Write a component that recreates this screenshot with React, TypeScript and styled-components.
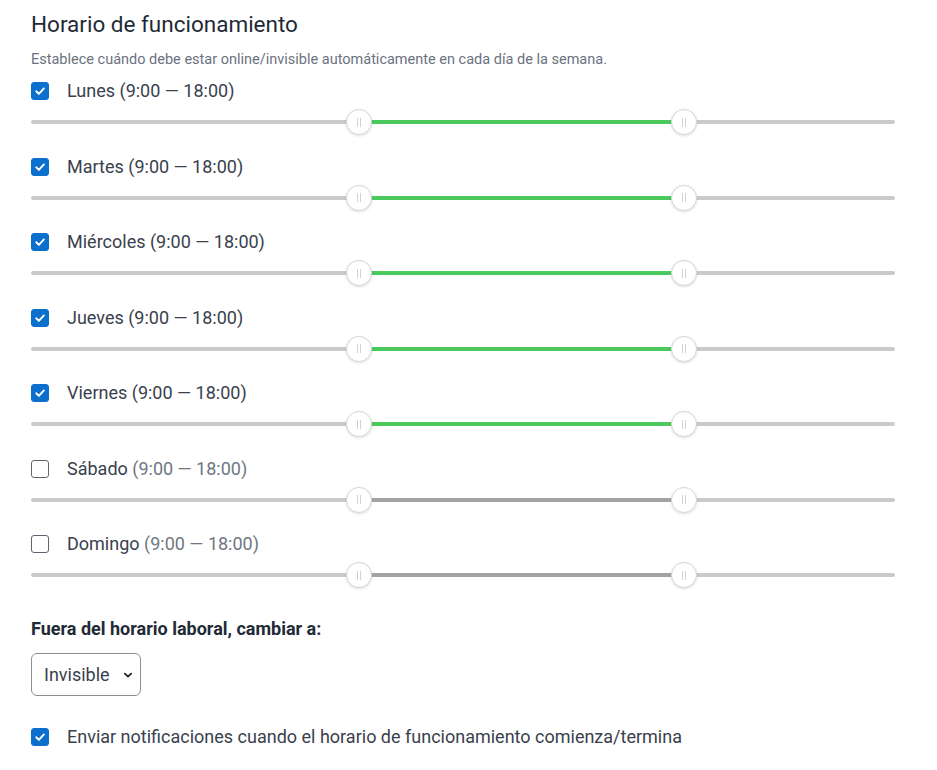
import styled, { createGlobalStyle } from 'styled-components'

const GlobalStyle = createGlobalStyle`
  body {
    margin: 0;
    background: #ffffff;
    font-family: Roboto, 'Liberation Sans', Arial, sans-serif;
  }
`

interface Day {
  name: string
  enabled: boolean
}

const days: Day[] = [
  { name: 'Lunes', enabled: true },
  { name: 'Martes', enabled: true },
  { name: 'Miércoles', enabled: true },
  { name: 'Jueves', enabled: true },
  { name: 'Viernes', enabled: true },
  { name: 'Sábado', enabled: false },
  { name: 'Domingo', enabled: false },
]

// thumb centres as a fraction of the track
const START = 0.3796
const END = 0.7558

function CheckIcon(): JSX.Element {
  return (
    <svg width="12" height="12" viewBox="0 0 12 12" fill="none">
      <path
        d="M2.2 6.3 L4.9 8.9 L9.9 3.4"
        stroke="#ffffff"
        strokeWidth="1.9"
        strokeLinecap="round"
        strokeLinejoin="round"
      />
    </svg>
  )
}

function Checkbox({ checked }: { checked: boolean }): JSX.Element {
  return <Box checked={checked}>{checked && <CheckIcon />}</Box>
}

function RangeSlider({ active }: { active: boolean }): JSX.Element {
  return (
    <SliderArea>
      <Track>
        <Fill
          active={active}
          style={{ left: `${START * 100}%`, width: `${(END - START) * 100}%` }}
        />
      </Track>
      <Thumb style={{ left: `${START * 100}%` }}>
        <Grip />
        <Grip />
      </Thumb>
      <Thumb style={{ left: `${END * 100}%` }}>
        <Grip />
        <Grip />
      </Thumb>
    </SliderArea>
  )
}

function App(): JSX.Element {
  return (
    <Page>
      <GlobalStyle />
      <Title>Horario de funcionamiento</Title>
      <Description>
        Establece cuándo debe estar online/invisible automáticamente en cada día
        de la semana.
      </Description>
      {days.map((day) => (
        <DayRow key={day.name}>
          <CheckLine>
            <Checkbox checked={day.enabled} />
            <LabelText>
              {day.name} <Hours muted={!day.enabled}>(9:00 — 18:00)</Hours>
            </LabelText>
          </CheckLine>
          <RangeSlider active={day.enabled} />
        </DayRow>
      ))}
      <SectionLabel>Fuera del horario laboral, cambiar a:</SectionLabel>
      <SelectWrap>
        <Select defaultValue="invisible">
          <option value="invisible">Invisible</option>
          <option value="online">Online</option>
        </Select>
        <Chevron width="12" height="12" viewBox="0 0 12 12" fill="none">
          <path
            d="M2.8 4.6 L6 7.6 L9.2 4.6"
            stroke="#222"
            strokeWidth="1.8"
            strokeLinecap="round"
            strokeLinejoin="round"
          />
        </Chevron>
      </SelectWrap>
      <NotifyLine>
        <Checkbox checked />
        <LabelText>
          Enviar notificaciones cuando el horario de funcionamiento
          comienza/termina
        </LabelText>
      </NotifyLine>
    </Page>
  )
}

export default App

const Page = styled.div`
  width: 864px;
  padding: 10px 31px 20px;
`

const Title = styled.h2`
  margin: 0 0 13px;
  font-size: 22.5px;
  line-height: 28px;
  font-weight: 400;
  color: #1f2a37;
`

const Description = styled.p`
  margin: 0 0 10px;
  font-size: 14.5px;
  line-height: 18px;
  color: #6b7280;
`

const DayRow = styled.div`
  display: flex;
  flex-direction: column;
  margin-bottom: 18.5px;
`

const CheckLine = styled.label`
  display: flex;
  align-items: center;
  gap: 18px;
  height: 24px;
`

const Box = styled.span<{ checked: boolean }>`
  box-sizing: border-box;
  width: 18px;
  height: 18px;
  border-radius: 3px;
  display: flex;
  align-items: center;
  justify-content: center;
  flex-shrink: 0;
  background: ${({ checked }) => (checked ? '#0b6fce' : '#ffffff')};
  border: ${({ checked }) =>
    checked ? '1px solid #0b6fce' : '1px solid #5f6670'};
`

const LabelText = styled.span`
  font-size: 18px;
  line-height: 24px;
  color: #39414d;
`

const Hours = styled.span<{ muted: boolean }>`
  color: ${({ muted }) => (muted ? '#6f7782' : '#39414d')};
`

const SliderArea = styled.div`
  position: relative;
  margin-top: 5px;
  height: 28px;
  display: flex;
  align-items: center;
`

const Track = styled.div`
  position: relative;
  width: 100%;
  height: 4px;
  border-radius: 2px;
  background: #cacaca;
`

const Fill = styled.div<{ active: boolean }>`
  position: absolute;
  top: 0;
  height: 4px;
  background: ${({ active }) => (active ? '#4cc95c' : '#a3a3a3')};
`

const Thumb = styled.div`
  position: absolute;
  top: 1px;
  box-sizing: border-box;
  width: 26px;
  height: 26px;
  margin-left: -13px;
  border-radius: 50%;
  background: #ffffff;
  border: 1px solid #d6d6d6;
  box-shadow: 0 1px 3px rgba(0, 0, 0, 0.12);
  display: flex;
  align-items: center;
  justify-content: center;
  gap: 2px;
`

const Grip = styled.span`
  width: 1px;
  height: 9px;
  background: #d2d2d2;
`

const SectionLabel = styled.div`
  margin-top: 29px;
  font-size: 18px;
  line-height: 22px;
  font-weight: 700;
  color: #1f2a37;
`

const SelectWrap = styled.div`
  position: relative;
  width: 110px;
  margin-top: 13px;
`

const Select = styled.select`
  appearance: none;
  box-sizing: border-box;
  width: 110px;
  height: 43px;
  padding: 0 0 0 12px;
  border: 1px solid #8a8f96;
  border-radius: 6px;
  background: #ffffff;
  font-family: Roboto, 'Liberation Sans', Arial, sans-serif;
  font-size: 18px;
  color: #39414d;
  outline: none;
  display: block;
`

const Chevron = styled.svg`
  position: absolute;
  right: 7px;
  top: 16px;
  pointer-events: none;
`

const NotifyLine = styled.label`
  display: flex;
  align-items: center;
  gap: 18px;
  height: 24px;
  margin-top: 29px;
`
